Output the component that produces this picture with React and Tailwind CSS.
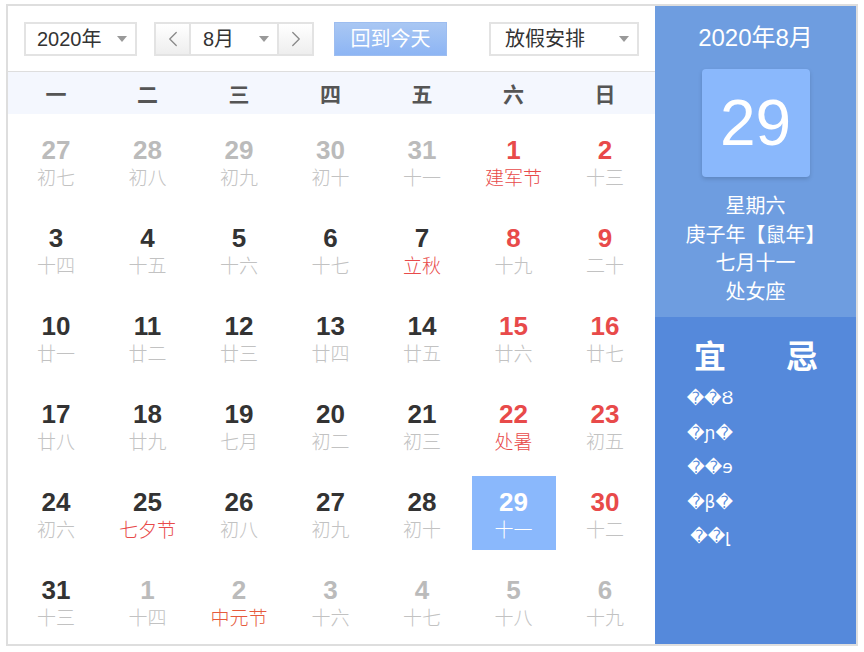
import { ChevronLeft, ChevronRight } from "lucide-react";

const FONT = { fontFamily: '"Liberation Sans", Arial, "Noto Sans CJK SC", sans-serif' };

const weekdays = ["一", "二", "三", "四", "五", "六", "日"];

// d: 日期, l: 农历, o: 非本月, f: 节日/节气
const days = [
  { d: 27, l: "初七", o: true }, { d: 28, l: "初八", o: true }, { d: 29, l: "初九", o: true },
  { d: 30, l: "初十", o: true }, { d: 31, l: "十一", o: true }, { d: 1, l: "建军节", f: true }, { d: 2, l: "十三" },
  { d: 3, l: "十四" }, { d: 4, l: "十五" }, { d: 5, l: "十六" }, { d: 6, l: "十七" },
  { d: 7, l: "立秋", f: true }, { d: 8, l: "十九" }, { d: 9, l: "二十" },
  { d: 10, l: "廿一" }, { d: 11, l: "廿二" }, { d: 12, l: "廿三" }, { d: 13, l: "廿四" },
  { d: 14, l: "廿五" }, { d: 15, l: "廿六" }, { d: 16, l: "廿七" },
  { d: 17, l: "廿八" }, { d: 18, l: "廿九" }, { d: 19, l: "七月" }, { d: 20, l: "初二" },
  { d: 21, l: "初三" }, { d: 22, l: "处暑", f: true }, { d: 23, l: "初五" },
  { d: 24, l: "初六" }, { d: 25, l: "七夕节", f: true }, { d: 26, l: "初八" }, { d: 27, l: "初九" },
  { d: 28, l: "初十" }, { d: 29, l: "十一", sel: true }, { d: 30, l: "十二" },
  { d: 31, l: "十三" }, { d: 1, l: "十四", o: true }, { d: 2, l: "中元节", o: true, f: true, orange: true },
  { d: 3, l: "十六", o: true }, { d: 4, l: "十七", o: true }, { d: 5, l: "十八", o: true }, { d: 6, l: "十九", o: true },
];

const yi = ["\uFFFD\uFFFDȢ", "\uFFFDɲ\uFFFD", "\uFFFD\uFFFDɘ", "\uFFFDβ\uFFFD", "\uFFFD\uFFFDլ"];

function Caret() {
  return <span className="w-0 h-0 border-l-[5px] border-r-[5px] border-t-[6px] border-l-transparent border-r-transparent border-t-[#999]" />;
}

function DayCell({ day, col }) {
  const weekend = col >= 5;
  let numColor = "text-[#333]";
  if (day.o) numColor = "text-[#bbb]";
  else if (weekend) numColor = "text-[#e84a4a]";
  let lunarColor = "text-[#c2c2c2]";
  if (day.f) lunarColor = day.orange ? "text-[#e65a3c]" : "text-[#e84a4a]";
  if (day.sel) {
    numColor = "text-white";
    lunarColor = "text-white";
  }
  return (
    <div className={`h-[74px] flex flex-col items-center pt-[12px] ${day.sel ? "bg-[#8ab8fc]" : ""}`}>
      <div className={`text-[26px] leading-[28px] font-bold ${numColor}`}>{day.d}</div>
      <div className={`mt-[4px] text-[19px] leading-[22px] font-light ${lunarColor}`}>{day.l}</div>
    </div>
  );
}

export default function App() {
  return (
    <div style={FONT} className="ml-[6px] mt-[4px] w-[852px] h-[642px] border-2 border-[#dedede] flex bg-white">
      {/* 日历主体 */}
      <div className="flex-1 flex flex-col">
        <div className="h-[66px] border-b border-[#dedede] flex items-center pl-[16px] pr-[16px] text-[20px] text-[#333]">
          <div className="w-[113px] h-[34px] border-2 border-[#e3e3e3] flex items-center justify-between pl-[11px] pr-[8px]">
            <span>2020年</span>
            <Caret />
          </div>
          <div className="ml-[17px] h-[34px] border-2 border-[#e3e3e3] flex">
            <div className="w-[33px] flex items-center justify-center bg-gradient-to-b from-white to-[#eeeeee]">
              <ChevronLeft size={26} strokeWidth={1.2} color="#888" />
            </div>
            <div className="w-[90px] flex items-center justify-between pl-[12px] pr-[8px] bg-white border-l-2 border-r-2 border-[#e3e3e3]">
              <span>8月</span>
              <Caret />
            </div>
            <div className="w-[33px] flex items-center justify-center bg-gradient-to-b from-white to-[#eeeeee]">
              <ChevronRight size={26} strokeWidth={1.2} color="#888" />
            </div>
          </div>
          <button className="ml-[20px] w-[113px] h-[34px] bg-gradient-to-b from-[#a9c7f3] to-[#8db5f4] text-white text-[20px] border border-[#9dbdf0]">
            回到今天
          </button>
          <div className="ml-auto w-[150px] h-[34px] border-2 border-[#e3e3e3] flex items-center justify-between pl-[14px] pr-[8px]">
            <span>放假安排</span>
            <Caret />
          </div>
        </div>

        <div className="h-[42px] bg-[#f4f7fe] grid grid-cols-7 gap-x-[7.5px] pl-[6px] pr-[8px] pt-[3px] items-center">
          {weekdays.map((w) => (
            <div key={w} className="text-center text-[21px] font-bold text-[#555]">{w}</div>
          ))}
        </div>

        <div className="grid grid-cols-7 gap-x-[7.5px] gap-y-[14px] pl-[6px] pr-[8px] pt-[10px]">
          {days.map((day, i) => (
            <DayCell key={i} day={day} col={i % 7} />
          ))}
        </div>
      </div>

      {/* 右侧信息 */}
      <div className="w-[201px] flex flex-col text-white">
        <div className="h-[311px] bg-[#6e9de0] flex flex-col items-center">
          <div className="mt-[18px] text-[24px] leading-[28px]">2020年8月</div>
          <div className="mt-[17px] w-[108px] h-[108px] bg-[#8ab8fc] rounded-[4px] shadow-[0_2px_4px_rgba(0,0,0,0.15)] flex items-center justify-center text-[64px]">
            29
          </div>
          <div className="mt-[15px] text-[20px] leading-[28.5px] text-center">
            <div>星期六</div>
            <div>庚子年【鼠年】</div>
            <div>七月十一</div>
            <div>处女座</div>
          </div>
        </div>
        <div className="flex-1 bg-[#5589db] flex pt-[21px]">
          <div className="ml-[20px] w-[70px] flex flex-col items-center">
            <div className="text-[32px] leading-[38px] font-bold">宜</div>
            <div className="mt-[5px] flex flex-col items-center text-[17px] leading-[34.5px]" style={{ fontFamily: '"DejaVu Sans", sans-serif' }}>
              {yi.map((t, i) => (
                <div key={i}>{t}</div>
              ))}
            </div>
          </div>
          <div className="ml-[22px] w-[70px] flex flex-col items-center">
            <div className="text-[32px] leading-[38px] font-bold">忌</div>
          </div>
        </div>
      </div>
    </div>
  );
}
